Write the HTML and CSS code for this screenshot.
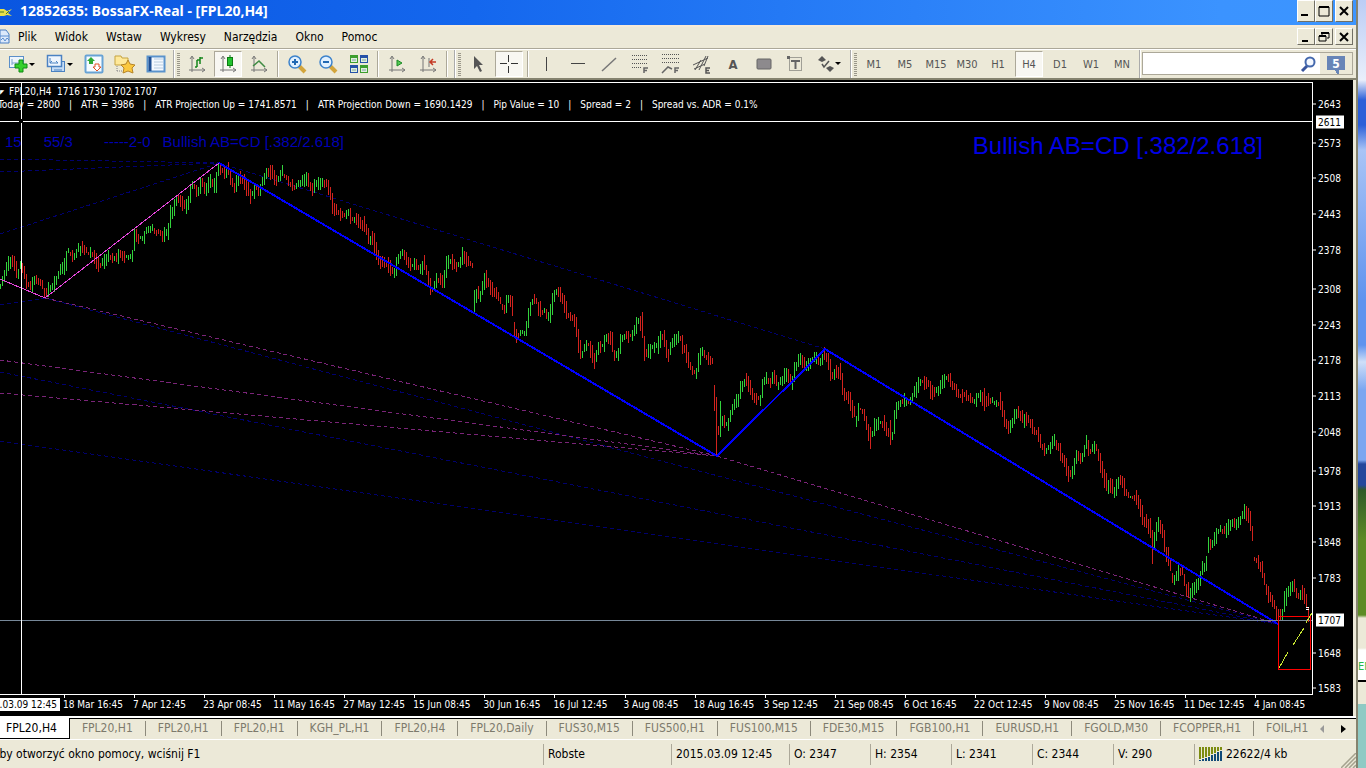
FILE: index.html
```
<!DOCTYPE html>
<html lang="pl">
<head>
    <meta charset="UTF-8">
    <meta name="viewport" content="width=device-width, initial-scale=1.0">
    <title>12852635: BossaFX-Real - [FPL20,H4]</title>
    <link rel="stylesheet" href="styles.css">
</head>
<body>
    <div class="window">
        <header class="titlebar">
            <svg class="app-icon" width="13" height="13" viewBox="0 0 13 13"><path d="M0 3h4l3 2 5-2-4 4 4 3-5-1-3 1H0z" fill="#e8e04a"/><path d="M0 6h4M6 8l3-3" stroke="#4a7a20"/></svg>
            <h1>12852635: BossaFX-Real - [FPL20,H4]</h1>
            <div class="win-buttons">
                <button aria-label="Minimize"><svg width="12" height="12"><path d="M1 10h7" stroke="#000" stroke-width="2"/></svg></button>
                <button aria-label="Maximize"><svg width="12" height="12"><path d="M1 2h10M1 2v9h10V2" fill="none" stroke="#000"/><path d="M1 2h10" stroke="#000" stroke-width="2"/></svg></button>
                <button class="close" aria-label="Close"><svg width="12" height="12"><path d="M2 2l8 8M10 2l-8 8" stroke="#000" stroke-width="2"/></svg></button>
            </div>
        </header>

        <nav class="menubar">
            <svg class="doc-icon" width="11" height="15" viewBox="0 0 11 15"><path d="M0 2V1h6l3 4v9H0z" fill="#dce9fb" stroke="#4a7fc4"/><path d="M0 7h9M1 11l2-2 2 3 2-3 2 2" fill="none" stroke="#5b8ed0"/></svg>
            <button>Plik</button>
            <button>Widok</button>
            <button>Wstaw</button>
            <button>Wykresy</button>
            <button>Narzędzia</button>
            <button>Okno</button>
            <button>Pomoc</button>
            <div class="win-buttons small">
                <button aria-label="Minimize chart"><svg width="12" height="12"><path d="M2 10h6" stroke="#000" stroke-width="2"/></svg></button>
                <button aria-label="Restore chart"><svg width="12" height="12"><path d="M4 4V2h7v5H9M1 5h7v5H1z" fill="none" stroke="#000"/><path d="M3 2h8M1 5h7" stroke="#000" stroke-width="2"/></svg></button>
                <button class="close" aria-label="Close chart"><svg width="12" height="12"><path d="M2 2l8 8M10 2l-8 8" stroke="#000" stroke-width="2"/></svg></button>
            </div>
        </nav>

        <div class="toolbar">
            <div class="group first">
                <button class="tool wide" aria-label="New chart"><svg width="27" height="20" viewBox="0 0 27 20"><rect x="1.500" y="2.500" width="14" height="11" fill="#eef5fd" stroke="#5b8fc9"/><path d="M4 11V5M4 9h7" stroke="#7ba1cd"/><path d="M11 6h4v4h4v4h-4v4h-4v-4H7v-4h4z" fill="#35d02c" stroke="#118a14"/><path d="M21 9h6l-3 3z"/></svg></button>
                <button class="tool wide" aria-label="Profiles"><svg width="27" height="20" viewBox="0 0 27 20"><rect x="5.500" y="7.500" width="13" height="10" fill="#c5dcf5" stroke="#4b82c2"/><rect x="1.500" y="1.500" width="14" height="11" fill="#eef5fd" stroke="#4b82c2" stroke-width="1.500"/><path d="M4 4v5h8M4 9l2-2M10 7l2 2M8 16h8" fill="none" stroke="#4b82c2"/><path d="M21 9h6l-3 3z"/></svg></button>
                <button class="tool" aria-label="Market watch"><svg width="20" height="20"><rect x="1.500" y="1.500" width="17" height="17" rx="1" fill="#f7fbff" stroke="#68a3d5" stroke-width="2"/><path d="M7 3l4 4H9v3H5V7H3z" fill="#2daa35"/><path d="M13 17l-4-4h2v-3h4v3h2z" fill="#fff" stroke="#e05326"/></svg></button>
                <button class="tool" aria-label="Navigator"><svg width="22" height="20"><path d="M1 2h6l1 2h6v7H1z" fill="#ffe99a" stroke="#c5a340"/><path d="M3 12v6M3 17h5" stroke="#888" stroke-dasharray="1 1"/><path d="M14 6l2 4 5 1-3 3 1 5-5-2-5 2 1-5-3-3 5-1z" fill="#fbc83f" stroke="#b58428"/></svg></button>
                <button class="tool" aria-label="Terminal"><svg width="20" height="20"><rect x="1.500" y="2.500" width="17" height="15" fill="#f4f9ff" stroke="#5a93cc" stroke-width="2"/><path d="M4 3v14" stroke="#1f4f93" stroke-width="3"/><path d="M8 5h9M8 8h9M8 11h9M8 14h9" stroke="#b8ccdf"/></svg></button>
            </div>

            <div class="group charts">
                <span class="grip"></span>
                <button class="tool" aria-label="Bar chart"><svg width="18" height="18"><path d="M4 2v15M1 15h16M2 4l2-3 2 3M14 13l3 2-3 2" fill="none" stroke="#777"/><path d="M9 12V5M9 5h3M12 2v7M7 12h2M12 3h3" fill="none" stroke="#14851b" stroke-width="1.500"/></svg></button>
                <button class="tool active" aria-label="Candlesticks"><svg width="18" height="18"><path d="M4 2v15M1 15h16M2 4l2-3 2 3M14 13l3 2-3 2" fill="none" stroke="#777"/><path d="M11 0v13" stroke="#0c7a12"/><rect x="8.500" y="2.500" width="5" height="8" fill="#22c22f" stroke="#0c7a12"/></svg></button>
                <button class="tool" aria-label="Line chart"><svg width="18" height="18"><path d="M4 2v15M1 15h16M2 4l2-3 2 3M14 13l3 2-3 2" fill="none" stroke="#777"/><path d="M3 11l6-5 6 6" fill="none" stroke="#3f8b43" stroke-width="1.500"/></svg></button>
                <span class="sep"></span>
                <button class="tool" aria-label="Zoom in"><svg width="20" height="20"><path d="M12 12l6 6" stroke="#d3a53c" stroke-width="4"/><circle cx="8" cy="8" r="6" fill="#e2f1ff" stroke="#3d83cc" stroke-width="1.500"/><path d="M5 8h6M8 5v6" stroke="#2269b3" stroke-width="2"/></svg></button>
                <button class="tool" aria-label="Zoom out"><svg width="20" height="20"><path d="M12 12l6 6" stroke="#d3a53c" stroke-width="4"/><circle cx="8" cy="8" r="6" fill="#e2f1ff" stroke="#3d83cc" stroke-width="1.500"/><path d="M5 8h6" stroke="#2269b3" stroke-width="2"/></svg></button>
                <button class="tool" aria-label="Tile windows"><svg width="20" height="20"><path d="M1 1h8v8H1zM11 11h8v8h-8z" fill="#3d9e2d"/><path d="M11 1h8v8h-8zM1 11h8v8H1z" fill="#2551a8"/><path d="M2 4h6v4H2zM12 4h6v4h-6zM2 14h6v4H2zM12 14h6v4h-6z" fill="#dfeedd"/><path d="M3 6h4M13 6h4M3 16h4M13 16h4" stroke="#7fa0a0"/></svg></button>
                <span class="sep"></span>
                <button class="tool" aria-label="Auto scroll"><svg width="18" height="18"><path d="M4 2v15M1 15h16M2 4l2-3 2 3M14 13l3 2-3 2" fill="none" stroke="#777"/><path d="M9 5l5 3-5 3z" fill="#54c853" stroke="#1a8a25"/></svg></button>
                <button class="tool" aria-label="Chart shift"><svg width="18" height="18"><path d="M4 2v15M1 15h16M2 4l2-3 2 3M14 13l3 2-3 2M10 3v9" fill="none" stroke="#777"/><path d="M11 7h6M14 4l-3 3 3 3" fill="none" stroke="#c43a24" stroke-width="1.500"/></svg></button>
                <span class="sep"></span>
            </div>

            <div class="group">
                <span class="grip"></span>
                <button class="tool" aria-label="Cursor"><svg width="18" height="18"><path d="M5 1v13l3-3 3 6 2-1-3-6h4z" fill="#555"/></svg></button>
                <button class="tool active" aria-label="Crosshair"><svg width="18" height="18"><path d="M8.500 0v7M8.500 11v7M0 8.500h7M11 8.500h7" stroke="#333"/></svg></button>
                <span class="sep"></span>
                <button class="tool" aria-label="Vertical line"><svg width="18" height="18"><path d="M8.500 2v14" stroke="#444"/></svg></button>
                <button class="tool" aria-label="Horizontal line"><svg width="18" height="18"><path d="M2 8.500h14" stroke="#444"/></svg></button>
                <button class="tool" aria-label="Trendline"><svg width="18" height="18"><path d="M2 16L16 3" stroke="#777" stroke-width="1.500"/></svg></button>
                <button class="tool" aria-label="Fibonacci retracement"><svg width="18" height="20"><path d="M1 1.500h16M1 5.500h16M1 9.500h16M1 13.500h10" stroke="#555" stroke-dasharray="1 1"/><path d="M13 19v-5h4M13 16.500h3" fill="none" stroke="#666" stroke-width="1.500"/></svg></button>
                <button class="tool" aria-label="Fibonacci fan"><svg width="20" height="20"><path d="M1 .500h18M1 4.500h18M1 8.500h18" stroke="#555" stroke-dasharray="1 1"/><path d="M1 19l6-6 4 2M14 19v-5h4M14 16.500h3" fill="none" stroke="#666" stroke-width="1.500"/></svg></button>
                <button class="tool" aria-label="Channel"><svg width="20" height="20"><path d="M1 11L16 4M2 15l11-5M3 16l6-10M7 16l7-14M12 12l4-10" stroke="#555"/><path d="M18 14h-4v5h4M14 16.500h3" fill="none" stroke="#555" stroke-width="1.500"/></svg></button>
                <button class="tool letter">A</button>
                <button class="tool" aria-label="Rectangle"><svg width="16" height="14"><rect x="1" y="2" width="14" height="10" rx="1" fill="#8d8a8d" stroke="#666"/></svg></button>
                <button class="tool" aria-label="Text label"><svg width="18" height="18"><rect x="3.500" y="2.500" width="12" height="13" fill="none" stroke="#555" stroke-dasharray="1 1"/><path d="M5 6h9M9.500 6v8" stroke="#666" stroke-width="2"/><path d="M1 1h3v3H1z" fill="#666"/></svg></button>
                <button class="tool wide" aria-label="Arrows"><svg width="27" height="18" viewBox="0 0 27 18"><path d="M6 1l4 4-4 2-4-2zM14 11l4 2-4 4-4-4z" fill="#555"/><path d="M6 9l2 3 5-6" fill="none" stroke="#555" stroke-width="1.500"/><path d="M19 7h6l-3 3z"/></svg></button>
            </div>

            <div class="group">
                <span class="grip"></span>
                <button class="tool">M1</button>
                <button class="tool">M5</button>
                <button class="tool">M15</button>
                <button class="tool">M30</button>
                <button class="tool">H1</button>
                <button class="tool active">H4</button>
                <button class="tool">D1</button>
                <button class="tool">W1</button>
                <button class="tool">MN</button>
            </div>

            <form class="search">
                <input type="text" aria-label="Search">
                <svg class="lens" width="18" height="18"><path d="M7 11l-5 5" stroke="#39549c" stroke-width="3"/><circle cx="10" cy="7" r="4.500" fill="#f4f8ff" stroke="#4468ad" stroke-width="2"/></svg>
                <button class="chat" type="button">5</button>
            </form>
        </div>

        <main class="chart">
            <section class="plot">
                <svg class="canvas" id="canvas" viewBox="0 83 1312 611" preserveAspectRatio="none">
                    <g class="projection">
                        <path d="M0 159L219 163M0 172L219 163M0 234L219 163M219 163L825 349M0 305L45 298L1278 624M0 372L1278 624M0 441L1278 624"/>
                    </g>
                    <g class="projection purple">
                        <path d="M45 298L717 456M0 360L717 456M0 393L717 456M717 456L1278 624"/>
                    </g>
                    <path id="up" class="bars up"/>
                    <path id="down" class="bars down"/>
                    <path class="leg" d="M0 279L45 298L219 163"/>
                    <path class="pattern" d="M219 163L717 456L825 349L1278 624"/>
                    <path class="bid" d="M0 620.500H1312"/>
                    <rect class="target" x="1278.500" y="616.500" width="32" height="53"/>
                    <path class="bars down" d="M1308.500 608V622"/>
                    <path class="target-ray" d="M1279 668L1288 652M1293 645L1304 628M1306 623L1312 613"/>
                    <path class="cross" d="M1306 607.500h3M1306 609.500h3M0 121.500H19M23 121.500H1312M21.500 83V119M21.500 123V694"/>
                </svg>
                <p class="ohlc"><span class="caret">◤</span>FPL20,H4&nbsp; 1716 1730 1702 1707</p>
                <p class="info"><span class="today">Today = 2800</span><span>ATR = 3986</span><span>ATR Projection Up = 1741.8571</span><span>ATR Projection Down = 1690.1429</span><span>Pip Value = 10</span><span>Spread = 2</span><span>Spread vs. ADR = 0.1%</span></p>
                <div class="pattern-row">
                    <p class="pattern-note"><span>15</span><span>55/3</span><span>-----2-0</span><span>Bullish AB=CD [.382/2.618]</span></p>
                    <p class="pattern-name">Bullish AB=CD [.382/2.618]</p>
                </div>
            </section>
            <div class="price-axis" id="prices"></div>
            <div class="time-axis">
                <span class="cursor-time">2015.03.09 12:45</span>
                <ol>
                    <li>18 Mar 16:45</li>
                    <li>7 Apr 12:45</li>
                    <li>23 Apr 08:45</li>
                    <li>11 May 16:45</li>
                    <li>27 May 12:45</li>
                    <li>15 Jun 08:45</li>
                    <li>30 Jun 16:45</li>
                    <li>16 Jul 12:45</li>
                    <li>3 Aug 08:45</li>
                    <li>18 Aug 16:45</li>
                    <li>3 Sep 12:45</li>
                    <li>21 Sep 08:45</li>
                    <li>6 Oct 16:45</li>
                    <li>22 Oct 12:45</li>
                    <li>9 Nov 08:45</li>
                    <li>25 Nov 16:45</li>
                    <li>11 Dec 12:45</li>
                    <li>4 Jan 08:45</li>
                </ol>
            </div>
        </main>

        <nav class="tabs">
            <button class="tab current">FPL20,H4</button>
            <button class="tab">FPL20,H1</button>
            <button class="tab">FPL20,H1</button>
            <button class="tab">FPL20,H1</button>
            <button class="tab">KGH_PL,H1</button>
            <button class="tab">FPL20,H4</button>
            <button class="tab">FPL20,Daily</button>
            <button class="tab">FUS30,M15</button>
            <button class="tab">FUS500,H1</button>
            <button class="tab">FUS100,M15</button>
            <button class="tab">FDE30,M15</button>
            <button class="tab">FGB100,H1</button>
            <button class="tab">EURUSD,H1</button>
            <button class="tab">FGOLD,M30</button>
            <button class="tab">FCOPPER,H1</button>
            <button class="tab">FOIL,H1</button>
            <div class="scrollers">
                <button aria-label="Scroll left"><svg width="5" height="8"><path d="M4 0v8L0 4z" fill="#999"/></svg></button>
                <button aria-label="Scroll right"><svg width="5" height="8"><path d="M0 0v8l5-4z"/></svg></button>
            </div>
        </nav>

        <footer class="status">
            <span class="help">Aby otworzyć okno pomocy, wciśnij F1</span>
            <span class="profile">Robste</span>
            <span class="date">2015.03.09 12:45</span>
            <span>O: 2347</span>
            <span>H: 2354</span>
            <span>L: 2341</span>
            <span>C: 2344</span>
            <span>V: 290</span>
            <span class="traffic"><svg width="24" height="14"><path d="M1 0v12M4 0v11M7 0v10M10 0v9M13 0v7M16 0v6M19 0v4M22 0v3" stroke="#7c8c10" stroke-width="2"/><path d="M1 13v1M4 12v2M7 11v3M10 10v4M13 8v6M16 7v7M19 5v9M22 4v10" stroke="#114a78" stroke-width="2"/></svg>22622/4 kb</span>
            <svg class="resize" width="15" height="15"><path d="M0 15L15 0M4 15L15 4M8 15l7-7M12 15l3-3" stroke="#a5a28f" stroke-width="1.500"/></svg>
        </footer>
    </div>
    <aside class="desktop"><span>EN</span></aside>

    <script>
        // Bar midpoints: x, y pairs, one list per session without gaps
        const sessions = [
            [0,285, 4,275, 7,265, 12,261, 15,267, 18,272, 20,266, 24,273, 27,285, 32,287, 34,280, 38,282, 42,283, 45,293, 50,288, 55,285, 58,273, 63,268, 67,257, 68,252, 73,257, 77,250, 83,248, 87,252, 93,253, 97,262, 100,265, 105,260, 109,255, 115,258, 121,255, 125,258, 132,255, 133,240, 135,237, 142,240, 147,230, 152,228, 157,232, 163,237, 168,233, 169,217, 173,210, 177,198, 182,202, 187,208, 189,195, 193,183, 197,192, 202,183, 205,192, 210,183, 215,188, 217,175, 219,168, 223,172, 228,170, 231,182, 235,188, 238,180, 243,178, 247,188, 251,197, 255,187, 259,195, 262,183, 267,170, 272,173, 277,183, 282,172, 287,178, 293,187, 300,182, 307,178, 312,190, 318,183, 327,183, 330,193, 333,208, 338,213,
             342,215, 345,218, 348,213, 353,222, 355,217, 360,222, 366,228, 369,240, 372,237, 375,248, 379,260, 385,263, 390,268, 394,275, 397,260, 402,253, 406,257, 411,267, 415,265, 420,268, 425,263, 429,283, 433,292, 435,280, 440,278, 443,285, 446,267, 450,260, 455,265, 459,267, 463,255, 467,262, 473,268],
            [474,300, 477,292, 480,297, 483,283, 487,278, 491,290, 497,293, 502,305, 505,310, 508,298, 512,307, 513,328, 517,337, 522,333, 526,330, 529,313, 532,303, 535,300, 538,308, 542,313, 546,312, 549,318, 553,298, 557,290, 563,298, 567,315, 572,318, 576,327, 579,347, 582,355, 586,345, 590,348, 595,360, 598,348, 603,347, 607,337, 612,342, 614,355, 618,353, 622,337, 627,335, 632,337, 635,328, 639,320, 642,327, 644,350, 648,353, 652,347, 657,347, 661,335, 665,340, 667,357, 670,350, 673,340, 679,337, 685,352, 690,367, 696,372, 699,357, 703,352, 709,360, 712,360],
            [714,397, 716,427, 719,433, 721,420, 723,422, 727,427, 730,418, 733,403, 737,402, 741,388, 746,380, 750,388, 753,398, 760,400, 763,383, 767,378, 770,383, 774,377, 777,385, 782,380, 787,373, 792,382, 795,367, 800,357, 805,365, 810,362, 817,357, 820,363, 824,355, 828,360, 831,378, 835,372, 840,373, 844,393, 848,398, 853,410, 856,420, 859,408, 864,415, 867,430, 871,437, 873,430, 878,422, 883,423, 887,430, 892,437, 895,417, 897,405, 903,402, 910,400, 915,390, 922,380, 927,383, 932,393, 937,392, 942,383, 948,377, 953,387, 958,395, 963,395, 973,402,
             980,395, 985,400, 992,402, 1000,402, 1003,415, 1007,428, 1011,428, 1014,418, 1018,413, 1023,420, 1027,418, 1033,428, 1038,435, 1042,447, 1046,450, 1050,447, 1054,440, 1058,447, 1063,460, 1069,475, 1073,470, 1076,458, 1082,457, 1086,442, 1090,450, 1096,447, 1100,463, 1103,473, 1107,487, 1111,483, 1113,493, 1120,480, 1125,490, 1128,497, 1135,497, 1140,507, 1143,522, 1147,522, 1151,532, 1153,547, 1156,532, 1159,523, 1163,533, 1166,555, 1169,558, 1172,577, 1175,580, 1178,572, 1183,570, 1185,587, 1190,595, 1194,588, 1200,580, 1202,568, 1206,565, 1207,545, 1212,545, 1215,537, 1219,528, 1225,532, 1231,522, 1237,523, 1240,520, 1244,510, 1249,517, 1252,532],
            [1254,560, 1260,565, 1263,573, 1267,593, 1272,600, 1277,612, 1282,615, 1285,597, 1289,592, 1293,583, 1297,597, 1301,592, 1307,602]
        ];

        // Tall bars: x -> [high, low]
        const spikes = {
            716: [397, 455], 720: [401, 437], 474: [290, 312], 462: [247, 265], 486: [270, 288],
            1152: [530, 564], 870: [427, 449], 984: [388, 411], 594: [353, 369], 890: [420, 445],
            218: [164, 176], 44: [288, 298], 1190: [588, 602], 1276: [606, 621], 966: [390, 401]
        };

        let seed = 7;
        function rnd() {
            seed = (seed * 16807) % 2147483647;
            return seed / 2147483647;
        }

        function midAt(list, x) {
            for (let i = 2; i < list.length; i += 2) {
                if (x <= list[i]) {
                    const t = (x - list[i - 2]) / (list[i] - list[i - 2]);
                    return list[i - 1] + t * (list[i + 1] - list[i - 1]);
                }
            }
            return list[list.length - 1];
        }

        let up = '';
        let down = '';
        sessions.forEach(list => {
            const end = list[list.length - 2];
            for (let x = list[0] + list[0] % 2; x <= end; x += 2) {
                const mid = midAt(list, x);
                const move = midAt(list, Math.min(x + 2, end)) - midAt(list, Math.max(x - 2, list[0]));
                const half = 1 + rnd() * 6 + Math.abs(move) / 4;
                const shift = (rnd() - 0.5) * 4;
                const [high, low] = spikes[x] || [Math.round(mid + shift - half), Math.round(mid + shift + half)];
                const bar = `M${x + 0.5} ${high}V${low}`;
                if (move + (rnd() - 0.5) * 5 < 0) {
                    up += bar;
                } else {
                    down += bar;
                }
            }
        });
        document.getElementById('up').setAttribute('d', up);
        document.getElementById('down').setAttribute('d', down);

        // Price scale
        const maxPrice = 2683;
        const priceRange = 1112;
        const axis = document.getElementById('prices');
        function addPrice(value, className) {
            const label = document.createElement('span');
            label.textContent = value;
            label.className = className;
            label.style.top = `${(maxPrice - value) / priceRange * 100}%`;
            axis.appendChild(label);
        }
        [2643, 2573, 2508, 2443, 2378, 2308, 2243, 2178, 2113, 2048, 1978, 1913, 1848, 1783, 1648, 1583].forEach(v => addPrice(v, 'price'));
        addPrice(2611, 'price marked');
        addPrice(1707, 'price marked');
    </script>
</body>
</html>
```
FILE: styles.css
```
:root {
    --face: #ece9d8;
    --shadow: #aca899;
    --blue: #0000ff;
    --ui-font: "DejaVu Sans Condensed", Tahoma, "DejaVu Sans", sans-serif;
}

* {
    margin: 0;
    padding: 0;
    box-sizing: border-box;
}

body {
    display: flex;
    height: 100vh;
    overflow: hidden;
    font-family: var(--ui-font);
    font-size: 11px;
    color: #000;
    background: var(--face);
}

button {
    font: inherit;
    color: inherit;
    background: none;
    border: none;
}

svg {
    display: block;
    flex: none;
}

.window {
    flex: 1;
    min-width: 0;
    display: flex;
    flex-direction: column;
    border-right: 2px solid #85836f;
}

/* Title bar */
.titlebar {
    display: flex;
    align-items: center;
    height: 25px;
    padding-right: 3px;
    background: linear-gradient(to right, #0a56e0, #1467ee 35%, #3b93ff 90%, #3c95ff);
    color: #fff;
}

.app-icon {
    margin-right: 7px;
}

h1 {
    flex: 1;
    font-family: "Noto Sans", sans-serif;
    font-size: 14px;
    line-height: 20px;
    padding-bottom: 3px;
    white-space: nowrap;
}

.win-buttons {
    display: flex;
    align-self: flex-start;
}

.win-buttons button {
    display: flex;
    align-items: center;
    justify-content: center;
    width: 18px;
    height: 22px;
    background: var(--face);
    border: 1px solid;
    border-color: #fff #716f64 #716f64 #fff;
}

.win-buttons .close {
    margin-left: 2px;
}

.win-buttons.small {
    margin: 1px 3px 0 auto;
}

.win-buttons.small button {
    height: 17px;
}

/* Menu */
.menubar {
    display: flex;
    align-items: center;
    height: 24px;
    padding-bottom: 2px;
    border-top: 2px solid #f6ead8;
    border-bottom: 1px solid var(--shadow);
    background: var(--face);
}

.doc-icon {
    margin-right: 7px;
}

.menubar > button {
    font-size: 12px;
    margin-right: 18px;
}

/* Toolbar */
.toolbar {
    display: flex;
    height: 31px;
    padding-right: 3px;
    border-top: 1px solid #fff;
    border-bottom: 2px solid #85836f;
    background: var(--face);
}

.group {
    display: flex;
    align-items: center;
    gap: 3px;
    padding: 0 3px 0 2px;
    border-right: 2px groove #fff;
}

.group.first {
    padding-left: 4px;
}

.group.charts {
    padding-right: 5px;
}

.grip {
    width: 3px;
    height: 23px;
    background: repeating-linear-gradient(#9a978a 0 1px, var(--face) 1px 2px);
}

.sep {
    width: 2px;
    height: 26px;
    margin: 0 1px;
    border-left: 1px solid var(--shadow);
    border-right: 1px solid #fff;
}

.tool {
    display: flex;
    align-items: center;
    justify-content: center;
    width: 28px;
    height: 26px;
    color: #555;
}

.tool.wide {
    width: 35px;
}

.tool.active {
    background: #f8f7f2;
    border: 1px solid;
    border-color: var(--shadow) #fff #fff var(--shadow);
}

.tool.letter {
    font-size: 13px;
    font-weight: bold;
}

.search {
    flex: 1;
    display: flex;
    align-items: center;
    background: #fff;
    margin: 2px 0 3px 1px;
    border: 1px solid var(--shadow);
}

.search input {
    flex: 1;
    min-width: 0;
    height: 20px;
    border: none;
    outline: none;
    font: inherit;
}

.lens {
    margin-right: 2px;
}

.chat {
    width: 32px;
    align-self: stretch;
    background:
        linear-gradient(225deg, #6885b7 50%, transparent 50%) 14px 17px / 5px 5px no-repeat,
        linear-gradient(#6885b7, #6885b7) 7px 3px / 18px 14px no-repeat,
        var(--face);
    color: #fff;
    font-size: 12px;
    font-weight: bold;
    line-height: 18px;
}

/* Chart */
.chart {
    flex: 1;
    min-height: 0;
    display: grid;
    grid-template-columns: 1fr 40px;
    grid-template-rows: 1fr 21px;
    margin-right: 3px;
    padding-top: 2px;
    background: #000;
    color: #fff;
    font-size: 10px;
    line-height: 13px;
}

.plot {
    position: relative;
    min-width: 0;
    padding-top: 2px;
    border: solid #fff;
    border-width: 1px 1px 1px 0;
    overflow: hidden;
    white-space: nowrap;
}

.canvas {
    position: absolute;
    inset: 0;
    width: 100%;
    height: 100%;
}

.canvas path,
.canvas rect {
    fill: none;
    vector-effect: non-scaling-stroke;
    shape-rendering: crispEdges;
}

.projection {
    stroke: #00006e;
    stroke-dasharray: 4 3;
}

.projection.purple {
    stroke: #7a2478;
}

.up {
    stroke: #32d23c;
}

.down {
    stroke: #d2231e;
}

.leg {
    stroke: #e646dc;
}

.pattern {
    stroke: var(--blue);
    stroke-width: 2;
}

.bid {
    stroke: #778899;
}

.target {
    stroke: #ff0000;
}

.target-ray {
    stroke: #c8e632;
}

.cross {
    stroke: #fff;
}

.caret {
    display: inline-block;
    width: 9px;
    font-size: 6px;
    vertical-align: top;
}

.info span + span::before {
    content: "|";
    padding: 0 9px;
}

.today {
    margin-left: -2px;
}

.pattern-row {
    display: flex;
    justify-content: space-between;
    margin-top: 21px;
    padding: 0 49px 0 5px;
    font-family: "Liberation Sans", Arial, sans-serif;
    line-height: 28px;
    color: #0000e6;
}

.pattern-note {
    font-size: 15px;
    line-height: 19px;
    color: #0000b4;
}

.pattern-note span {
    margin-right: 12px;
}

.pattern-note span:first-child {
    margin-right: 22px;
}

.pattern-note span:nth-child(2) {
    margin-right: 31px;
}

.pattern-name {
    font-size: 24px;
}

.price-axis {
    position: relative;
}

.price {
    position: absolute;
    left: 0;
    padding-left: 5px;
    transform: translateY(-50%);
}

.price::before {
    content: "";
    position: absolute;
    left: 0;
    top: 6px;
    width: 3px;
    height: 1px;
    background: #fff;
}

.price.marked {
    left: 3px;
    padding: 0 3px 0 2px;
    background: #fff;
    color: #000;
}

.time-axis {
    grid-column: 1 / -1;
    display: flex;
    padding-right: 40px;
    white-space: nowrap;
}

.cursor-time {
    display: flex;
    justify-content: flex-end;
    width: 60px;
    height: 13px;
    margin: 3px 3px 0 0;
    padding-right: 3px;
    overflow: hidden;
    background: #fff;
    color: #000;
}

.time-axis ol {
    flex: 1;
    display: flex;
    list-style: none;
}

.time-axis li {
    flex: 70 1 0;
    min-width: 0;
}

.time-axis li:last-child {
    flex-grow: 59;
}

.time-axis li::before {
    content: "";
    display: block;
    width: 1px;
    height: 3px;
    margin-left: 1px;
    background: #fff;
}

/* Chart tabs */
.tabs {
    display: flex;
    align-items: center;
    height: 24px;
    border-top: 2px solid #fff;
    border-bottom: 1px solid #fff;
    box-shadow: inset 0 1px #000;
    background: var(--face);
    font-size: 12px;
    white-space: nowrap;
}

.tab {
    padding: 0 12px;
    line-height: 15px;
    color: #7d7a6c;
    border-right: 1px solid #8d8a7c;
}

.tab:nth-last-child(2) {
    border-right: none;
}

.tab.current {
    align-self: stretch;
    padding: 0 12px 0 6px;
    background: #fff;
    color: #000;
    border: solid #000;
    border-width: 0 1px 1px 0;
}

.scrollers {
    display: flex;
    margin-left: auto;
    padding-right: 12px;
    gap: 16px;
}

/* Status bar */
.status {
    display: flex;
    align-items: center;
    height: 28px;
    font-size: 12px;
    line-height: 21px;
    white-space: nowrap;
    background: var(--face);
}

.status span {
    flex: none;
    width: 81px;
    padding-left: 4px;
    border-left: 1px solid var(--shadow);
}

.status .help {
    flex: 1;
    min-width: 0;
    margin-left: -8px;
    padding-left: 0;
    border: none;
}

.status .profile {
    width: 128px;
}

.status .date {
    width: 118px;
}

.status .traffic {
    display: flex;
    align-items: center;
    gap: 3px;
    width: 147px;
}

.resize {
    align-self: flex-end;
}

/* Strip of desktop beside the window */
.desktop {
    width: 8px;
    padding-top: 660px;
    overflow: hidden;
    font-size: 11px;
    color: #2ab84a;
    background: linear-gradient(#bccdf5, #e9effb 80px, #2c5fd8 100px, #2c5fd8 125px, #a9c4f6 150px, #5f93ee 300px, #5f93ee 345px, #cfdff8 362px, #7ba6f0 390px, #7ba6f0 460px, #24479c 464px, #24479c 485px, #2f5a28 490px, #5d8b25 540px, #5d8b25 615px, #ece9d8 618px, #ece9d8 648px, #fff 650px, #fff 680px, #000 680px, #000 682px, #ece9d8 682px, #ece9d8 704px, #8fcac4 704px);
}
```
